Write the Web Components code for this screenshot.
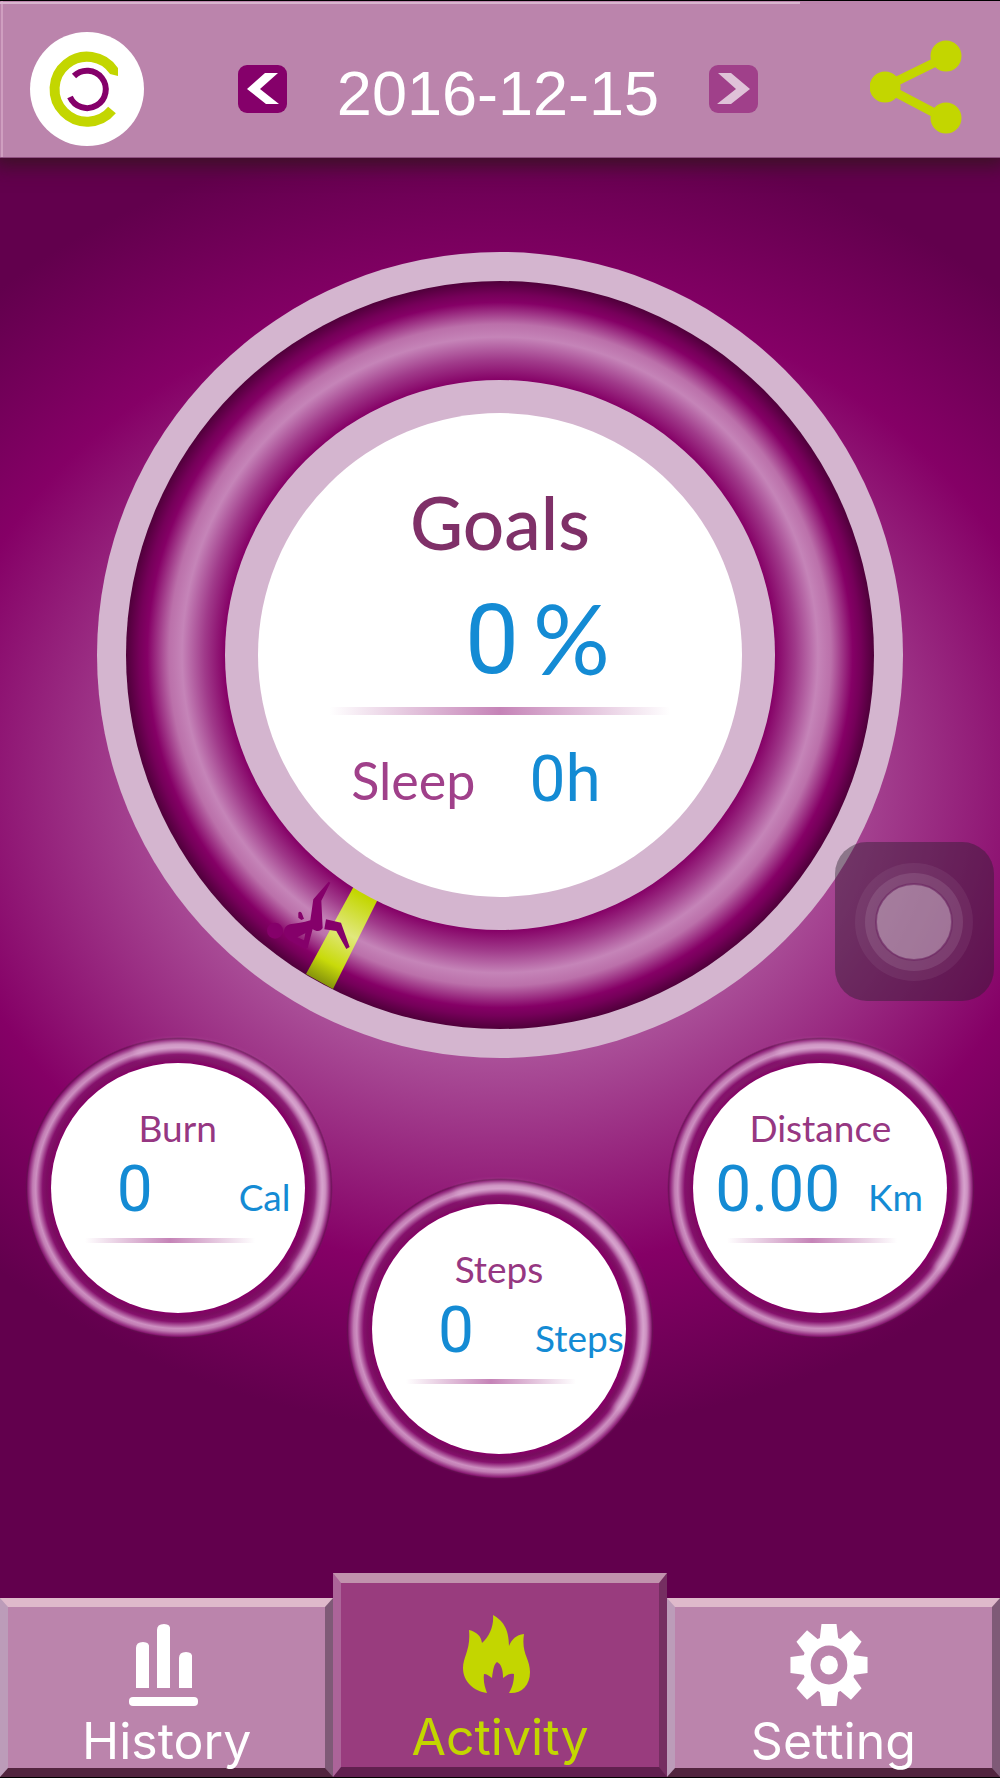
<!DOCTYPE html>
<html lang="en">
<head>
<meta charset="UTF-8">
<meta name="viewport" content="width=device-width, initial-scale=1">
<title>Activity</title>
<style>
    * {
        box-sizing: border-box;
    }

    body {
        margin: 0;
        background: #62004d;
        font-family: Lato, "Open Sans", sans-serif;
    }
</style>
</head>
<body>
<activity-app></activity-app>

<script>
class DateHeader extends HTMLElement {
    constructor() {
        super();
        this.attachShadow({ mode: 'open' });
    }

    connectedCallback() {
        this.shadowRoot.innerHTML = `
            <style>
                :host {
                    display: grid;
                    grid-template-columns: 1fr auto 1fr;
                    align-items: center;
                    box-sizing: border-box;
                    height: 158px;
                    padding: 20px 34px 0 30px;
                    background:
                        linear-gradient(#d9b5cf, #d9b5cf) 0 1px / 80% 2px no-repeat,
                        linear-gradient(#cf9fc0, #cf9fc0) 1px 0 / 2px 100% no-repeat,
                        #bb84ac;
                    border-top: 1px solid #000;
                    border-bottom: 1px solid #8f4f80;
                    box-shadow: 0 2px 18px 6px #3c1126;
                    position: relative;
                }

                svg {
                    display: block;
                }

                button {
                    padding: 0;
                    border: 0;
                    background: none;
                    cursor: pointer;
                }

                .share {
                    justify-self: end;
                }

                .picker {
                    display: flex;
                    align-items: center;
                    gap: 50px;
                }

                .arrow {
                    width: 49px;
                    height: 48px;
                    border-radius: 9px;
                    background: #85006a;
                    color: #fff;
                }

                .arrow:disabled {
                    background: #a0408a;
                    color: #dfc2d8;
                }

                time {
                    color: #fff;
                    font: 63px/72px "Liberation Sans", Arial, sans-serif;
                    padding-top: 8px;
                }
            </style>

            <button class="logo" aria-label="Profile">
                <svg width="114" height="114" viewBox="0 0 114 114" fill="none">
                    <circle cx="57" cy="57" r="57" fill="#fff"/>
                    <path d="M84 39A32.500 32.500 0 1 0 82 78" stroke="#c3d600" stroke-width="10"/>
                    <path d="M88 36V44L80 42V37Z" fill="#c3d600"/>
                    <path d="M44 44A18.700 18.700 0 1 1 40 65" stroke="#85006a" stroke-width="6"/>
                </svg>
            </button>
            <div class="picker">
                <button class="arrow" aria-label="Previous day">
                    <svg width="49" height="48" viewBox="0 0 49 48"><path d="M27 8h13L22 24l19 15H28L9 24z" fill="currentColor"/></svg>
                </button>
                <time datetime="${this.getAttribute('date')}">${this.getAttribute('date')}</time>
                <button class="arrow" aria-label="Next day" disabled>
                    <svg width="49" height="48" viewBox="0 0 49 48"><path d="M9 8h13l19 16-19 15H8l19-15z" fill="currentColor"/></svg>
                </button>
            </div>
            <button class="share" aria-label="Share">
                <svg width="96" height="98" viewBox="0 0 96 98" fill="#c3d600">
                    <path d="M76 17 15 47l61 32" fill="none" stroke="#c3d600" stroke-width="9"/>
                    <circle cx="15" cy="47" r="15.500"/>
                    <circle cx="76" cy="16" r="15.500"/>
                    <circle cx="76" cy="78" r="15.500"/>
                </svg>
            </button>
        `;
    }
}

class GoalDial extends HTMLElement {
    constructor() {
        super();
        this.attachShadow({ mode: 'open' });
    }

    connectedCallback() {
        this.shadowRoot.innerHTML = `
            <style>
                :host {
                    display: grid;
                    width: 806px;
                    max-width: 100%;
                }

                svg, .content {
                    grid-area: 1 / 1;
                }

                svg {
                    display: block;
                    width: 100%;
                }

                .content {
                    display: flex;
                    flex-direction: column;
                    align-items: center;
                    padding-top: 230px;
                }

                h1 {
                    margin: 0;
                    font-size: 73px;
                    font-weight: 500;
                    line-height: 80px;
                    color: #7f3068;
                }

                .percent, .sleep {
                    display: flex;
                    align-items: center;
                    color: #148bd4;
                    font-family: Roboto, sans-serif;
                }

                .percent {
                    gap: 14px;
                    margin-top: 22px;
                    padding-left: 75px;
                    font-size: 96px;
                    line-height: 112px;
                }

                .percent small {
                    font: 96px/108px Lato, sans-serif;
                    margin-bottom: 4px;
                }

                .rule {
                    width: 340px;
                    height: 8px;
                    margin-top: 11px;
                    background: linear-gradient(90deg, #fff0, #c583b7, #fff0);
                }

                .sleep {
                    gap: 54px;
                    margin-top: 29px;
                    padding-right: 48px;
                    font-size: 64px;
                    line-height: 72px;
                }

                .sleep label {
                    color: #a0408a;
                    font-family: Lato, sans-serif;
                    font-size: 52px;
                }
            </style>

            <svg viewBox="0 0 806 806" aria-hidden="true">
                <defs>
                    <radialGradient id="groove" gradientUnits="userSpaceOnUse" cx="403" cy="403" r="374">
                        <stop offset=".735" stop-color="#850066"/>
                        <stop offset=".79" stop-color="#a03a8a"/>
                        <stop offset=".85" stop-color="#c584b8"/>
                        <stop offset=".885" stop-color="#bb70aa"/>
                        <stop offset=".943" stop-color="#850066"/>
                        <stop offset=".965" stop-color="#750059"/>
                        <stop offset="1" stop-color="#4f003a"/>
                    </radialGradient>
                    <radialGradient id="marker" gradientUnits="userSpaceOnUse" cx="403" cy="403" r="374">
                        <stop offset=".74" stop-color="#c3d600"/>
                        <stop offset=".85" stop-color="#e1e87d"/>
                        <stop offset=".94" stop-color="#c8da0a"/>
                        <stop offset="1" stop-color="#83900c"/>
                    </radialGradient>
                </defs>
                <circle cx="403" cy="403" r="403" fill="#d4b5cf"/>
                <circle cx="403" cy="403" r="374" fill="url(#groove)"/>
                <path d="M257 634 282 645 236 737 209 722Z" fill="url(#marker)"/>
                <circle cx="403" cy="403" r="275" fill="#d4b5cf"/>
                <circle cx="403" cy="403" r="242" fill="#fff"/>
                <!-- falling figure -->
                <g transform="translate(143 598) scale(.3333)" fill="#85006a">
                    <circle cx="105" cy="242" r="24"/>
                    <path fill-rule="evenodd" d="M150 223C170 219 190 219 211 211L220 148 266 95 271 98 244 152 248 234C242 245 230 246 218 237L203 294 195 297 150 272C125 258 128 228 150 223ZM172 262 192 271 196 250Z"/>
                    <path d="M175 188q5-6 10 1l7 17-8 4-9-7z"/>
                    <path d="M258 208 303 218 329 291 319 297 289 243 253 238Z"/>
                </g>
            </svg>
            <div class="content">
                <h1>Goals</h1>
                <div class="percent"><span>${this.getAttribute('percent')}</span><small>%</small></div>
                <div class="rule"></div>
                <div class="sleep"><label for="sleep">Sleep</label><output id="sleep">${this.getAttribute('sleep')}</output></div>
            </div>
        `;
    }
}

class StatDial extends HTMLElement {
    constructor() {
        super();
        this.attachShadow({ mode: 'open' });
    }

    connectedCallback() {
        this.shadowRoot.innerHTML = `
            <style>
                :host {
                    display: grid;
                    width: 308px;
                }

                svg, .content {
                    grid-area: 1 / 1;
                }

                svg {
                    display: block;
                }

                .content {
                    padding-top: 72px;
                }

                h2 {
                    margin: 0;
                    padding-right: 2px;
                    font-size: 37px;
                    font-weight: 400;
                    line-height: 40px;
                    text-align: center;
                    color: #963782;
                }

                .reading {
                    display: flex;
                    align-items: baseline;
                    gap: var(--unit-gap, 28px);
                    margin-top: 10px;
                    padding-left: 48px;
                    color: #148bd4;
                    font: 64px/64px Roboto, sans-serif;
                    white-space: nowrap;
                }

                .value {
                    flex: 0 0 124px;
                    text-align: center;
                }

                .unit {
                    font: 37px/40px Lato, sans-serif;
                }

                .rule {
                    width: 170px;
                    height: 5px;
                    margin: 16px 0 0 60px;
                    background: linear-gradient(90deg, #fff0, #c583b7, #fff0);
                }
            </style>

            <svg width="308" height="304" viewBox="0 0 308 304" aria-hidden="true">
                <defs>
                    <radialGradient id="ring">
                        <stop offset=".83" stop-color="#850066"/>
                        <stop offset=".86" stop-color="#7c1062" stop-opacity=".8"/>
                        <stop offset=".885" stop-color="#85106c"/>
                        <stop offset=".93" stop-color="#cd8fc1"/>
                        <stop offset=".95" stop-color="#c27db4"/>
                        <stop offset=".982" stop-color="#8a1a74"/>
                        <stop offset=".99" stop-color="#62104f" stop-opacity=".7"/>
                        <stop offset="1" stop-color="#62104f" stop-opacity="0"/>
                    </radialGradient>
                    <filter id="soft"><feGaussianBlur stdDeviation="3"/></filter>
                </defs>
                <ellipse cx="154" cy="152" rx="154" ry="151" fill="url(#ring)"/>
                <path d="M110 17A142 141 0 0 1 270 233" fill="none" stroke="#e2b8da" stroke-opacity=".55" stroke-width="9" filter="url(#soft)"/>
                <ellipse cx="153" cy="152" rx="127" ry="125" fill="#fff"/>
            </svg>
            <div class="content">
                <h2>${this.getAttribute('label')}</h2>
                <div class="reading">
                    <span class="value">${this.getAttribute('value')}</span>
                    <span class="unit">${this.getAttribute('unit')}</span>
                </div>
                <div class="rule"></div>
            </div>
        `;
    }
}

class TabItem extends HTMLElement {
    constructor() {
        super();
        this.attachShadow({ mode: 'open' });
    }

    connectedCallback() {
        this.shadowRoot.innerHTML = `
            <style>
                :host {
                    display: block;
                }

                a {
                    display: flex;
                    flex-direction: column;
                    align-items: center;
                    gap: 4px;
                    box-sizing: border-box;
                    height: 179px;
                    padding-top: 16px;
                    border: solid;
                    border-width: 9px 8px;
                    border-color: #dfb9cb #7f5a77 #52253f #bc9cb9;
                    background: #bb84ac;
                    color: #fff;
                    font: 400 50px/60px Inter, sans-serif;
                    text-decoration: none;
                }

                :host([active]) a {
                    gap: 8px;
                    height: 204px;
                    padding-top: 32px;
                    border-width: 10px 8px;
                    border-color: #c192ad #752e61 #61204f #ac6499;
                    background: #993c7e;
                    color: #c3d600;
                }

                ::slotted(svg) {
                    display: block;
                    flex: none;
                    height: 84px;
                    margin-right: 8px;
                }
            </style>
            <a href="#${this.getAttribute('label').toLowerCase()}">
                <slot></slot>
                <span>${this.getAttribute('label')}</span>
            </a>
        `;
    }
}

class AssistiveButton extends HTMLElement {
    constructor() {
        super();
        this.attachShadow({ mode: 'open' });
    }

    connectedCallback() {
        this.shadowRoot.innerHTML = `
            <style>
                :host {
                    display: block;
                }

                button {
                    display: block;
                    padding: 0;
                    width: 159px;
                    height: 159px;
                    border: 0;
                    border-radius: 32px;
                    background: rgba(40, 32, 42, .42);
                }

                svg {
                    display: block;
                }
            </style>
            <button aria-label="Assistive menu">
                <svg width="159" height="159" viewBox="0 0 159 159" fill="#fff">
                    <circle cx="79" cy="80" r="59" fill-opacity=".06"/>
                    <circle cx="79" cy="80" r="49" fill-opacity=".1"/>
                    <circle cx="79" cy="80" r="38" fill-opacity=".28" stroke="#6b2560" stroke-opacity=".6" stroke-width="2"/>
                </svg>
            </button>
        `;
    }
}

class ActivityApp extends HTMLElement {
    constructor() {
        super();
        this.attachShadow({ mode: 'open' });
    }

    connectedCallback() {
        this.shadowRoot.innerHTML = `
            <style>
                :host {
                    display: flex;
                    flex-direction: column;
                    box-sizing: border-box;
                    min-height: 100vh;
                    position: relative;
                    background: radial-gradient(76% 653px at 50% 780px, #dbb7da, #850066 75%, #62004d);
                    border-bottom: 1px solid #000;
                }

                main {
                    flex: 1;
                    display: flex;
                    flex-direction: column;
                    align-items: center;
                    padding-top: 94px;
                }

                .stats {
                    display: grid;
                    grid-template-columns: repeat(3, 1fr);
                    justify-items: center;
                    align-items: start;
                    align-self: stretch;
                    margin-top: -22px;
                    padding: 0 18px;
                }

                .stats .low {
                    margin-top: 141px;
                }

                nav {
                    display: grid;
                    grid-template-columns: repeat(3, 1fr);
                    align-items: end;
                }

                assistive-button {
                    position: absolute;
                    top: 842px;
                    right: 6px;
                }
            </style>

            <date-header date="2016-12-15"></date-header>
            <main>
                <goal-dial percent="0" sleep="0h"></goal-dial>
                <section class="stats">
                    <stat-dial label="Burn" value="0" unit="Cal" style="--unit-gap: 42px"></stat-dial>
                    <stat-dial class="low" label="Steps" value="0" unit="Steps" style="--unit-gap: 17px"></stat-dial>
                    <stat-dial label="Distance" value="0.00" unit="Km"></stat-dial>
                </section>
            </main>
            <nav>
                <tab-item label="History">
                    <svg width="70" height="84" viewBox="0 0 70 84" fill="#fff">
                        <path d="M8 65V25q0-6 7-6t6 6v40zM29 65V7q0-6 7-6t6 6v58zM51 65V35q0-6 7-6t6 6v30z"/>
                        <rect x="1" y="74" width="69" height="9" rx="4"/>
                    </svg>
                </tab-item>
                <tab-item label="Activity" active>
                    <svg width="70" height="84" viewBox="0 0 70 84" fill="#c3d600">
                        <path d="M32 0C41 5 48 13 48 31 51 24 55 20 63 19 60 39 69 43 69 57 69 71 60 79 48 78 51 73 53 67 53 59 49 58 46 60 42 63 42 54 40 49 36 47 33 49 32 55 31 63 28 61 26 59 23 59 22 66 24 73 26 78 13 76 2 67 2 53 2 42 10 34 8 15 16 17 20 21 21 28 29 21 33 10 32 0Z"/>
                    </svg>
                </tab-item>
                <tab-item label="Setting">
                    <svg width="78" height="84" viewBox="0 0 78 84">
                        <defs><path id="tooth" d="M-10-25-8-41H8L10-25Z"/></defs>
                        <g transform="translate(39 42) scale(.94 1)" fill="#fff">
                            <circle r="24" fill="none" stroke="#fff" stroke-width="9"/>
                            <use href="#tooth"/>
                            <use href="#tooth" transform="rotate(45)"/>
                            <use href="#tooth" transform="rotate(90)"/>
                            <use href="#tooth" transform="rotate(135)"/>
                            <use href="#tooth" transform="rotate(180)"/>
                            <use href="#tooth" transform="rotate(225)"/>
                            <use href="#tooth" transform="rotate(270)"/>
                            <use href="#tooth" transform="rotate(315)"/>
                            <circle r="9.500"/>
                        </g>
                    </svg>
                </tab-item>
            </nav>
            <assistive-button></assistive-button>
        `;
    }
}

customElements.define('date-header', DateHeader);
customElements.define('goal-dial', GoalDial);
customElements.define('stat-dial', StatDial);
customElements.define('tab-item', TabItem);
customElements.define('assistive-button', AssistiveButton);
customElements.define('activity-app', ActivityApp);
</script>
</body>
</html>
